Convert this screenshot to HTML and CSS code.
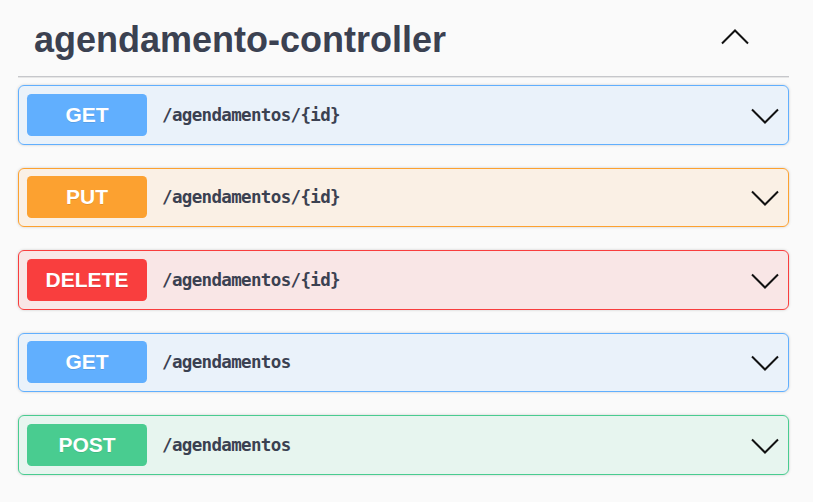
FILE: index.html
```html
<!DOCTYPE html>
<html>
<head>
<meta charset="utf-8">
<link rel="stylesheet" href="styles.css">
</head>
<body>
<div class="section">
  <div class="tag">
    <h3 class="tag-title">agendamento-controller</h3>
    <svg class="tag-arrow" width="28" height="16" viewBox="0 0 28 16"><polyline points="1,14.5 14,1.5 27,14.5" fill="none" stroke="#111" stroke-width="2"/></svg>
  </div>
  <div class="ops">
    <div class="op op-get">
      <span class="method">GET</span>
      <span class="path">/agendamentos/{id}</span>
      <svg class="op-arrow" width="28" height="16" viewBox="0 0 28 16"><polyline points="1,1.5 14,14.5 27,1.5" fill="none" stroke="#111" stroke-width="2"/></svg>
    </div>
    <div class="op op-put">
      <span class="method">PUT</span>
      <span class="path">/agendamentos/{id}</span>
      <svg class="op-arrow" width="28" height="16" viewBox="0 0 28 16"><polyline points="1,1.5 14,14.5 27,1.5" fill="none" stroke="#111" stroke-width="2"/></svg>
    </div>
    <div class="op op-delete">
      <span class="method">DELETE</span>
      <span class="path">/agendamentos/{id}</span>
      <svg class="op-arrow" width="28" height="16" viewBox="0 0 28 16"><polyline points="1,1.5 14,14.5 27,1.5" fill="none" stroke="#111" stroke-width="2"/></svg>
    </div>
    <div class="op op-get">
      <span class="method">GET</span>
      <span class="path">/agendamentos</span>
      <svg class="op-arrow" width="28" height="16" viewBox="0 0 28 16"><polyline points="1,1.5 14,14.5 27,1.5" fill="none" stroke="#111" stroke-width="2"/></svg>
    </div>
    <div class="op op-post">
      <span class="method">POST</span>
      <span class="path">/agendamentos</span>
      <svg class="op-arrow" width="28" height="16" viewBox="0 0 28 16"><polyline points="1,1.5 14,14.5 27,1.5" fill="none" stroke="#111" stroke-width="2"/></svg>
    </div>
  </div>
</div>
</body>
</html>
```

FILE: styles.css
```css
html, body {
  margin: 0;
  padding: 0;
  background: #fafafa;
}
body {
  font-family: "Liberation Sans", Arial, sans-serif;
  color: #3b4151;
}
.section {
  padding: 0 24px 0 18px;
}
.tag {
  display: flex;
  align-items: center;
  height: 73px;
  padding-top: 3px;
  border-bottom: 1px solid #c6c7cb;
  box-shadow: 0 1px 0 #e6e6e6;
}
.tag-title {
  flex: 1;
  margin: 0 0 0 16px;
  font-size: 36px;
  font-weight: bold;
  color: #3b4151;
  line-height: 41px;
}
.tag-arrow {
  margin-right: 40px;
  margin-top: -6px;
}
.ops {
  padding-top: 8px;
}
.op {
  display: flex;
  align-items: center;
  box-sizing: border-box;
  height: 59.5px;
  margin-bottom: 23px;
  padding: 0 8px;
  border: 1px solid;
  border-radius: 6px;
  box-shadow: 0 0 3px rgba(0, 0, 0, .19);
}
.method {
  display: flex;
  align-items: center;
  justify-content: center;
  width: 120px;
  height: 42px;
  border-radius: 4.5px;
  color: #fff;
  font-size: 21px;
  font-weight: bold;
  text-shadow: 0 1px 0 rgba(0, 0, 0, .1);
}
.path {
  flex: 1;
  padding-left: 15px;
  font-family: "DejaVu Sans Mono", monospace;
  font-weight: bold;
  font-size: 17.5px;
  letter-spacing: -0.65px;
  color: #3b4151;
}
.op-arrow {
  margin-right: 1px;
  margin-top: 2px;
}
.op-get { background: rgba(97, 175, 254, .1); border-color: #61affe; }
.op-get .method { background: #61affe; }
.op-put { background: rgba(252, 161, 48, .1); border-color: #fca130; }
.op-put .method { background: #fca130; }
.op-delete { background: rgba(249, 62, 62, .1); border-color: #f93e3e; }
.op-delete .method { background: #f93e3e; }
.op-post { background: rgba(73, 204, 144, .1); border-color: #49cc90; }
.op-post .method { background: #49cc90; }
```
